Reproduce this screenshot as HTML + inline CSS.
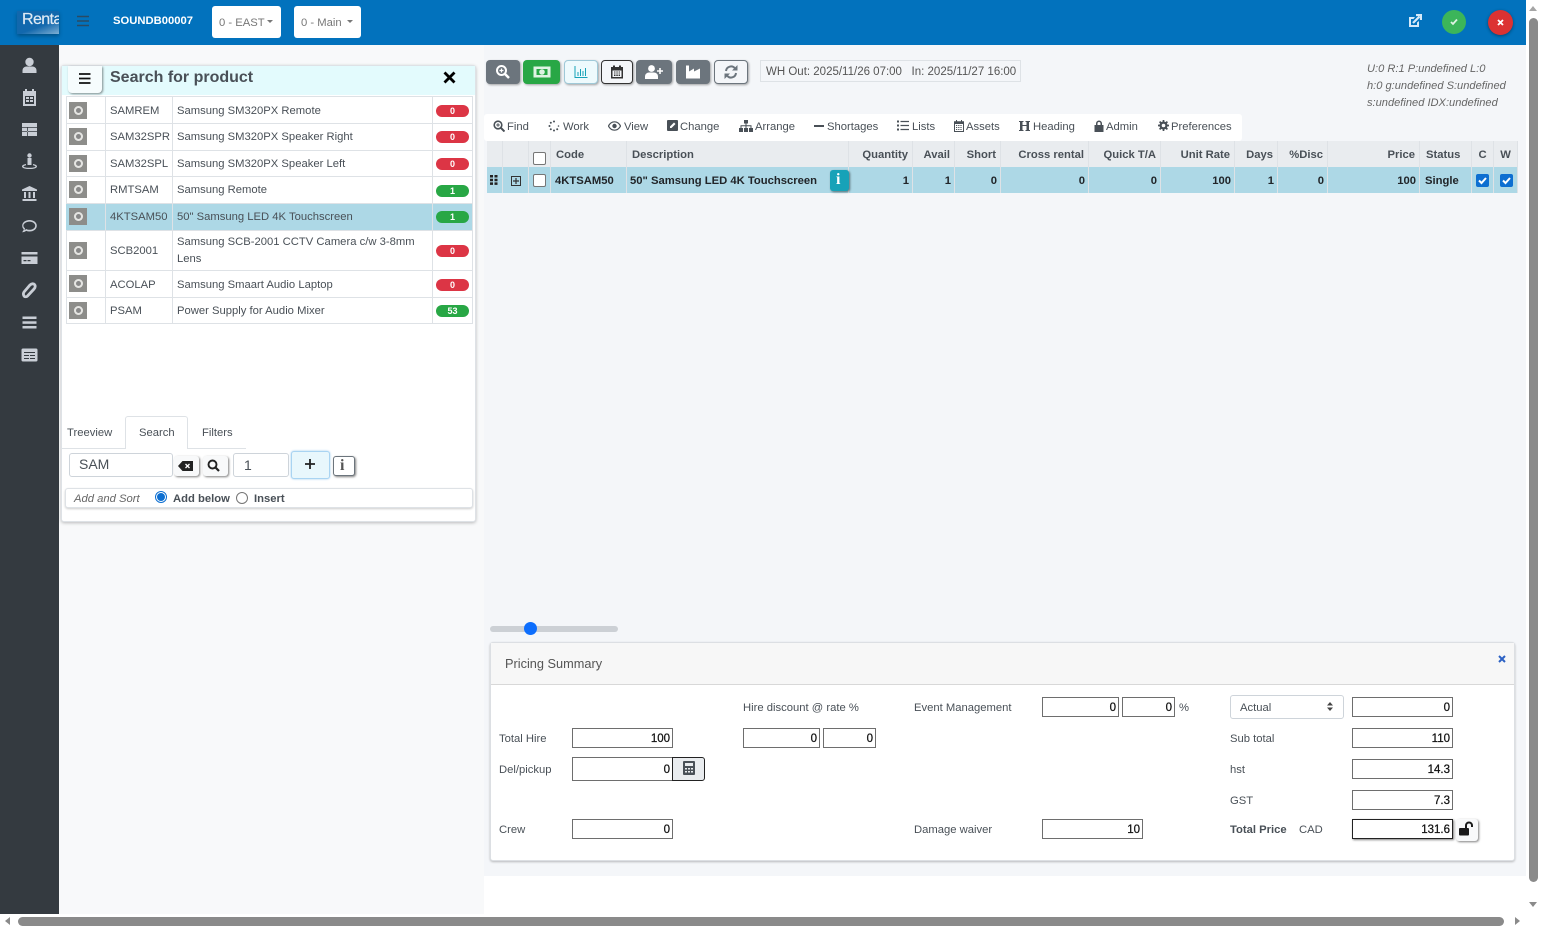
<!DOCTYPE html>
<html><head><meta charset="utf-8"><title>Search for product</title>
<style>
html,body{margin:0;padding:0;width:1541px;height:929px;overflow:hidden;background:#fff}
body{position:relative;font-family:"Liberation Sans",sans-serif;font-size:11.25px;color:#495057}
div,span,svg{position:absolute;box-sizing:border-box}
.t{white-space:nowrap;line-height:14px;margin-top:1px}
.b{font-weight:700}
.sb{left:21px;width:17px;height:17px;fill:#c9ced6}
.gear{left:69px;width:18px;height:17px;background:#8d8d8a}
.gear:after{content:"";position:absolute;left:4.500px;top:4px;width:9px;height:9px;border-radius:50%;background:#e5e5e2;box-shadow:inset 0 0 0 2px #e5e5e2,inset 0 0 0 5px #888}
.bd{left:436px;width:33px;height:12px;border-radius:6px;color:#fff;font-size:9px;font-weight:700;text-align:center;line-height:12px}
.r{background:#dc3545}.g{background:#28a745}
.btn{top:60px;height:24px;border-radius:4px;background:#6c757d;box-shadow:1px 1px 2px rgba(0,0,0,.35)}
.btn svg{left:50%;top:50%;transform:translate(-50%,-50%)}
.hd{top:141px;height:26px;background:#e9ecef;border-right:1px solid #dee2e6;font-weight:700;line-height:28px;padding:0 4px 0 5px;white-space:nowrap;color:#495057;font-size:11.25px}
.rw{top:167px;height:26px;background:#add8e6;border-right:1px solid #dee2e6;font-weight:700;line-height:28px;padding:0 3px 0 5px;white-space:nowrap;color:#212529;font-size:11.25px}
.ra{text-align:right}
.in{height:20px;background:#fff;border:1px solid #6e6e6e;text-align:right;color:#111;font-size:11.5px;line-height:20px;padding-right:2px;-webkit-text-stroke:.25px #111}
.cb{width:13px;height:13px;background:#fff;border:1px solid #767676;border-radius:2px}
.ck{width:13px;height:13px;background:#0d6fd1;border-radius:2px}
</style></head><body>

<!-- backgrounds -->
<div style="left:59px;top:45px;width:425px;height:869px;background:#f8f9fa"></div>
<div style="left:484px;top:45px;width:1042px;height:831px;background:#f4f6f9"></div>

<!-- header -->
<div style="left:0;top:0;width:1526px;height:45px;background:#0272bd"></div>
<div style="left:17px;top:11px;width:42px;height:23px;background:linear-gradient(160deg,#1268ad 62%,#7fb0d4);overflow:hidden;box-shadow:0 2px 4px rgba(0,0,0,.3)"><span class="t" style="left:5px;top:1px;color:#dfeaf4;font-size:16px;letter-spacing:-.6px;-webkit-text-stroke:.2px #dfeaf4">Renta</span></div>
<svg style="left:77px;top:15px" width="12" height="12" viewBox="0 0 12 12"><path d="M0 1.500h12M0 6h12M0 10.500h12" stroke="#2a4a63" stroke-width="1.500"/></svg>
<span class="t b" style="left:113px;top:13px;color:#fff">SOUNDB00007</span>
<div style="left:212px;top:6px;width:69px;height:32px;background:#fff;border-radius:3px"><span class="t" style="left:7px;top:9px;color:#777">0 - EAST</span><span style="left:55px;top:14px;border:3.500px solid transparent;border-top-color:#777;border-bottom:0"></span></div>
<div style="left:294px;top:6px;width:67px;height:32px;background:#fff;border-radius:3px"><span class="t" style="left:7px;top:9px;color:#777">0 - Main</span><span style="left:53px;top:14px;border:3.500px solid transparent;border-top-color:#777;border-bottom:0"></span></div>
<svg style="left:1408px;top:14px" width="14" height="14" viewBox="0 0 14 14"><path d="M1 3h6L5.500 5H3v6h6V8.500l2-1.500v6H1z" fill="#d5e9f8"/><path d="M5 9l6.500-6.500M8 1h5v5" stroke="#d5e9f8" stroke-width="2.200" fill="none"/></svg>
<div style="left:1442px;top:10px;width:24px;height:24px;border-radius:50%;background:#3cb55a"></div>
<svg style="left:1450px;top:18px" width="8" height="8" viewBox="0 0 8 8"><path d="M1 4l2 2 4-4.500" stroke="#dff3e3" stroke-width="1.800" fill="none"/></svg>
<div style="left:1488px;top:10px;width:25px;height:25px;border-radius:50%;background:#dc3232;box-shadow:0 1px 3px rgba(0,0,0,.4)"></div>
<svg style="left:1497px;top:19px" width="7" height="7" viewBox="0 0 7 7"><path d="M1 1l5 5M6 1L1 6" stroke="#fff" stroke-width="1.800"/></svg>

<!-- sidebar -->
<div style="left:0;top:45px;width:59px;height:869px;background:#343a40"></div>
<svg class="sb" style="top:57px" viewBox="0 0 17 17"><circle cx="8.500" cy="5" r="4.200"/><path d="M1.500 16v-2.500c0-2.500 2-4 4-4h6c2 0 4 1.500 4 4V16z"/></svg>
<svg class="sb" style="top:89px" viewBox="0 0 17 17"><path d="M4 0h2v2h5V0h2v2h2v15H2V2h2zM4 7v8h9V7z" fill-rule="evenodd"/><path d="M5 8h3v2H5zM9 8h3v2H9zM5 11h3v2H5zM9 11h3v2H9z"/></svg>
<svg class="sb" style="top:121px" viewBox="0 0 17 17"><path d="M1 2h15v13H1zM1 6v.8h15V6zM1 10v.8h15V10zM6 6.800v8.200h.8V6.800z" fill-rule="evenodd"/></svg>
<svg class="sb" style="top:153px" viewBox="0 0 17 17"><circle cx="8.500" cy="2.500" r="2.200"/><rect x="6.500" y="5" width="4" height="7"/><path d="M5 11C2 11.500 1 12.500 1 13.500c0 1.500 3 2.500 7.500 2.500s7.500-1 7.500-2.500c0-1-1-2-4-2.500v1.200c1.500.3 2.500.8 2.500 1.300 0 .7-2.500 1.300-6 1.300s-6-.6-6-1.300c0-.5 1-1 2.500-1.300z"/></svg>
<svg class="sb" style="top:185px" viewBox="0 0 17 17"><path d="M8.500 1L16 4.500V6H1V4.500zM3 7h2v6H3zM7.500 7h2v6h-2zM12 7h2v6h-2zM1.500 14h14v2h-14z"/></svg>
<svg class="sb" style="top:218px" viewBox="0 0 17 17"><path d="M8.500 2C4.300 2 1.200 4.500 1.200 7.700c0 1.400.6 2.600 1.600 3.600-.3 1.200-1 2.200-1.800 3 1.700 0 3.200-.6 4.200-1.400 1 .4 2.100.6 3.300.6 4.200 0 7.300-2.600 7.300-5.800S12.700 2 8.500 2zm0 1.600c3.300 0 5.700 1.900 5.700 4.100s-2.400 4.100-5.700 4.100c-1.200 0-2.300-.3-3.300-.8-.6.500-1.100.8-1.700 1 .3-.6.400-1.200.5-1.800-1-.7-1.600-1.500-1.600-2.500 0-2.200 2.800-4.100 6.100-4.100z"/></svg>
<svg class="sb" style="top:250px" viewBox="0 0 17 17"><rect x="0.500" y="2" width="16" height="2.500"/><path d="M0.500 6.500h16V14h-16zM2.500 10v1.300h3V10zM6.500 10v1.300h3V10z" fill-rule="evenodd"/></svg>
<svg class="sb" style="top:282px" viewBox="0 0 17 17"><path d="M3 10l6-7c1.500-1.500 3.500-1.500 4.500-.5s1 3-.5 4.500l-6.500 7c-1 1-2.500 1-3.300.2S2 11.500 3 10z" fill="none" stroke="#c9ced6" stroke-width="2.800"/></svg>
<svg class="sb" style="top:314px" viewBox="0 0 17 17"><rect x="1.500" y="2.500" width="14" height="2.500"/><rect x="1.500" y="7.300" width="14" height="2.500"/><rect x="1.500" y="12" width="14" height="2.500"/></svg>
<svg class="sb" style="top:346px" viewBox="0 0 17 17"><path d="M0.500 4C0.500 3 1 2.500 2 2.500h13c1 0 1.500.5 1.500 1.500v10c0 1-.5 1.500-1.500 1.500H2c-1 0-1.500-.5-1.500-1.500zM3 6v1h11V6zM3 9v1h5V9zM9 9v1h5V9zM3 12v1h5v-1zM9 12v1h5v-1z" fill-rule="evenodd"/></svg>

<!-- search panel -->
<div style="left:61px;top:65px;width:415px;height:457px;background:#fff;border:1px solid #dee2e6;border-radius:3px;box-shadow:0 1px 3px rgba(0,0,0,.25)"></div>
<div style="left:62px;top:66px;width:413px;height:29px;background:#e3fbfd"></div>
<div style="left:68px;top:66px;width:34px;height:27px;background:#f6fcfd;border-radius:0 0 4px 4px;box-shadow:1px 1px 2px rgba(0,0,0,.45)"></div>
<svg style="left:79px;top:73px" width="12" height="11" viewBox="0 0 12 11"><path d="M0 1h11.500M0 5.500h11.500M0 10h11.500" stroke="#111" stroke-width="1.700"/></svg>
<span class="t b" style="left:110px;top:67px;font-size:16px;line-height:19px;color:#495057">Search for product</span>
<svg style="left:443px;top:71px" width="13" height="13" viewBox="0 0 13 13"><path d="M1.500 1.500l10 10M11.500 1.500l-10 10" stroke="#000" stroke-width="2.800"/></svg>

<!-- search rows -->
<div style="left:66px;top:96px;width:407px;height:228px;background:#fff;border:1px solid #dee2e6;border-bottom:0;border-right:0"></div>
<div style="left:66px;top:204px;width:407px;height:26px;background:#add8e6"></div>
<div style="left:66px;top:123px;width:407px;height:1px;background:#dee2e6"></div>
<div style="left:66px;top:150px;width:407px;height:1px;background:#dee2e6"></div>
<div style="left:66px;top:176px;width:407px;height:1px;background:#dee2e6"></div>
<div style="left:66px;top:203px;width:407px;height:1px;background:#dee2e6"></div>
<div style="left:66px;top:230px;width:407px;height:1px;background:#dee2e6"></div>
<div style="left:66px;top:270px;width:407px;height:1px;background:#dee2e6"></div>
<div style="left:66px;top:297px;width:407px;height:1px;background:#dee2e6"></div>
<div style="left:66px;top:323px;width:407px;height:1px;background:#dee2e6"></div>
<div style="left:105px;top:96px;width:1px;height:228px;background:#dee2e6"></div>
<div style="left:172px;top:96px;width:1px;height:228px;background:#dee2e6"></div>
<div style="left:432px;top:96px;width:1px;height:228px;background:#dee2e6"></div>
<div style="left:472px;top:96px;width:1px;height:228px;background:#dee2e6"></div>

<div class="gear" style="top:102px"></div><span class="t" style="left:110px;top:103px">SAMREM</span><span class="t" style="left:177px;top:103px">Samsung SM320PX Remote</span><div class="bd r" style="top:105px">0</div>
<div class="gear" style="top:128px"></div><span class="t" style="left:110px;top:129px">SAM32SPR</span><span class="t" style="left:177px;top:129px">Samsung SM320PX Speaker Right</span><div class="bd r" style="top:131px">0</div>
<div class="gear" style="top:155px"></div><span class="t" style="left:110px;top:156px">SAM32SPL</span><span class="t" style="left:177px;top:156px">Samsung SM320PX Speaker Left</span><div class="bd r" style="top:158px">0</div>
<div class="gear" style="top:181px"></div><span class="t" style="left:110px;top:182px">RMTSAM</span><span class="t" style="left:177px;top:182px">Samsung Remote</span><div class="bd g" style="top:185px">1</div>
<div class="gear" style="top:208px"></div><span class="t" style="left:110px;top:209px">4KTSAM50</span><span class="t" style="left:177px;top:209px">50" Samsung LED 4K Touchscreen</span><div class="bd g" style="top:211px">1</div>
<div class="gear" style="top:242px"></div><span class="t" style="left:110px;top:243px">SCB2001</span><span class="t" style="left:177px;top:234px">Samsung SCB-2001 CCTV Camera c/w 3-8mm</span><span class="t" style="left:177px;top:251px">Lens</span><div class="bd r" style="top:245px">0</div>
<div class="gear" style="top:275px"></div><span class="t" style="left:110px;top:277px">ACOLAP</span><span class="t" style="left:177px;top:277px">Samsung Smaart Audio Laptop</span><div class="bd r" style="top:279px">0</div>
<div class="gear" style="top:302px"></div><span class="t" style="left:110px;top:303px">PSAM</span><span class="t" style="left:177px;top:303px">Power Supply for Audio Mixer</span><div class="bd g" style="top:305px">53</div>

<!-- tabs -->
<div style="left:62px;top:448px;width:184px;height:1px;background:#dee2e6"></div>
<div style="left:125px;top:416px;width:63px;height:33px;background:#fff;border:1px solid #dee2e6;border-bottom:0;border-radius:3px 3px 0 0"></div>
<span class="t" style="left:67px;top:425px">Treeview</span>
<span class="t" style="left:139px;top:425px">Search</span>
<span class="t" style="left:202px;top:425px">Filters</span>

<div style="left:69px;top:453px;width:104px;height:24px;background:#fff;border:1px solid #ced4da;border-radius:3px"></div>
<span class="t" style="left:79px;top:456px;font-size:14px;line-height:15px">SAM</span>
<div style="left:174px;top:456px;width:25px;height:20px;background:#f8f9fa;border-radius:3px;box-shadow:1px 1px 2px rgba(0,0,0,.5)"></div>
<svg style="left:178px;top:461px" width="15" height="10" viewBox="0 0 15 10"><path d="M4.500 0H15v10H4.500L0 5z" fill="#222"/><path d="M7.500 3l4 4M11.500 3l-4 4" stroke="#fff" stroke-width="1.300"/></svg>
<div style="left:203px;top:456px;width:25px;height:20px;background:#f8f9fa;border-radius:3px;box-shadow:1px 1px 2px rgba(0,0,0,.5)"></div>
<svg style="left:207px;top:459px" width="13" height="13" viewBox="0 0 13 13"><circle cx="5.500" cy="5.500" r="4" fill="none" stroke="#222" stroke-width="1.900"/><path d="M8.500 8.500l3.500 3.500" stroke="#222" stroke-width="2.200"/></svg>
<div style="left:233px;top:453px;width:56px;height:24px;background:#fff;border:1px solid #ced4da;border-radius:3px"></div>
<span class="t" style="left:244px;top:457px;font-size:14px;line-height:15px">1</span>
<div style="left:291px;top:451px;width:39px;height:28px;background:#e8f7fc;border:1px solid #a9d4f2;border-radius:3px;box-shadow:0 0 2px #9cc9ec"></div>
<svg style="left:305px;top:459px" width="10" height="10" viewBox="0 0 10 10"><path d="M5 0v10M0 5h10" stroke="#222" stroke-width="1.800"/></svg>
<div style="left:333px;top:456px;width:22px;height:20px;background:#fff;border:1px solid #6c757d;border-radius:3px;box-shadow:1px 1px 2px rgba(0,0,0,.5)"></div>
<span class="t b" style="left:340px;top:458px;font-family:'Liberation Serif',serif;font-size:16px;color:#555">i</span>

<div style="left:65px;top:488px;width:408px;height:20px;background:#fff;border:1px solid #dee2e6;border-radius:3px;box-shadow:0 1px 2px rgba(0,0,0,.2)"></div>
<span class="t" style="left:74px;top:491px;font-style:italic;color:#666">Add and Sort</span>
<div style="left:155px;top:491px;width:12px;height:12px;border-radius:50%;border:1px solid #0d6fd1;background:#fff"></div>
<div style="left:157px;top:493px;width:8px;height:8px;border-radius:50%;background:#0d6fd1"></div>
<span class="t b" style="left:173px;top:491px;color:#495057">Add below</span>
<div style="left:236px;top:492px;width:12px;height:12px;border-radius:50%;border:1px solid #767676;background:#fff"></div>
<span class="t b" style="left:254px;top:491px;color:#495057">Insert</span>

<!-- top toolbar -->
<div class="btn" style="left:486px;width:34px"><svg width="15" height="15" viewBox="0 0 15 15"><circle cx="6" cy="6" r="4.500" fill="none" stroke="#fff" stroke-width="2"/><path d="M9.500 9.500l4 4" stroke="#fff" stroke-width="2.500"/><path d="M4 6h4M6 4v4" stroke="#fff" stroke-width="1.200"/></svg></div>
<div class="btn" style="left:523px;width:37px;background:#28a745"><svg width="17" height="11" viewBox="0 0 17 11"><path d="M0 0h17v11H0zM3 2.500v6h11v-6z" fill="#dff3e3" fill-rule="evenodd"/><circle cx="8.500" cy="5.500" r="2.800" fill="#dff3e3"/></svg></div>
<div class="btn" style="left:564px;width:34px;background:#eefafd;border:1px solid #9fc9d8"><svg width="13" height="12" viewBox="0 0 13 12"><path d="M.5 0v11.500H13M3.500 6v4M6 3v7M8.500 5v5M11 2v8" stroke="#17a2b8" fill="none"/></svg></div>
<div class="btn" style="left:601px;width:32px;background:#f4f6f9;border:1px solid #333"><svg width="12" height="13" viewBox="0 0 12 13"><path d="M2 0h2v1.500h4V0h2v1.500h2V13H0V1.500h2zM1.500 5v6.500h9V5z" fill="#333" fill-rule="evenodd"/><path d="M3 6.500h6M3 8.500h6M3 10h6" stroke="#333" stroke-dasharray="1.500 .8"/></svg></div>
<div class="btn" style="left:636px;width:36px"><svg width="18" height="14" viewBox="0 0 18 14"><circle cx="6.500" cy="3.500" r="3.400" fill="#fff"/><path d="M0 14v-2.500C0 9 2 7.500 4 7.500h5c2 0 4 1.500 4 4V14z" fill="#fff"/><path d="M15 3v6M12 6h6" stroke="#fff" stroke-width="1.600"/></svg></div>
<div class="btn" style="left:676px;width:34px"><svg width="14" height="13" viewBox="0 0 14 13"><path d="M0 0h3v6l5-3v3l6-3v10H0z" fill="#fff"/></svg></div>
<div class="btn" style="left:714px;width:34px;background:#f4f6f9;border:1px solid #6c757d"><svg width="14" height="14" viewBox="0 0 14 14"><path d="M2 6a5 5 0 0 1 9-2.500M12 8a5 5 0 0 1-9 2.500" fill="none" stroke="#6c757d" stroke-width="2"/><path d="M13.500 0v5.500H8zM.5 14V8.500H6z" fill="#6c757d"/></svg></div>
<div style="left:760px;top:60px;width:261px;height:22px;border:1px solid #dee2e6"></div>
<span class="t" style="left:766px;top:64px;font-size:11.5px;color:#555">WH Out: 2025/11/26 07:00&nbsp;&nbsp; In: 2025/11/27 16:00</span>

<span class="t" style="left:1367px;top:61px;font-style:italic;color:#666;font-size:11.1px">U:0 R:1 P:undefined L:0</span>
<span class="t" style="left:1367px;top:78px;font-style:italic;color:#666;font-size:11.1px">h:0 g:undefined S:undefined</span>
<span class="t" style="left:1367px;top:95px;font-style:italic;color:#666;font-size:11.1px">s:undefined IDX:undefined</span>

<!-- menu -->
<div style="left:484px;top:114px;width:758px;height:27px;background:#fff;border-radius:3px"></div>
<svg style="left:493px;top:120px" width="12" height="12" viewBox="0 0 12 12"><circle cx="5" cy="5" r="3.800" fill="none" stroke="#495057" stroke-width="1.600"/><path d="M8 8l3.500 3.500" stroke="#495057" stroke-width="2"/><path d="M3.200 5h3.600M5 3.200v3.600" stroke="#495057"/></svg><span class="t" style="left:507px;top:119px">Find</span>
<svg style="left:548px;top:120px" width="12" height="12" viewBox="0 0 12 12"><g fill="#495057"><circle cx="6" cy="1.500" r="1"/><circle cx="2.800" cy="2.800" r="1"/><circle cx="1.500" cy="6" r="1"/><circle cx="2.800" cy="9.200" r="1"/><circle cx="6" cy="10.500" r="1"/><circle cx="9.200" cy="9.200" r="1"/><circle cx="10.500" cy="6" r=".8"/></g></svg><span class="t" style="left:563px;top:119px">Work</span>
<svg style="left:608px;top:121px" width="13" height="10" viewBox="0 0 13 10"><path d="M.5 5C2 2 4 .8 6.500.8S11 2 12.500 5C11 8 9 9.200 6.500 9.200S2 8 .5 5z" fill="none" stroke="#495057" stroke-width="1.200"/><circle cx="6.500" cy="5" r="2.200" fill="#495057"/></svg><span class="t" style="left:624px;top:119px">View</span>
<svg style="left:667px;top:120px" width="11" height="11" viewBox="0 0 11 11"><path d="M0 1q0-1 1-1h9q1 0 1 1v9q0 1-1 1H1q-1 0-1-1z" fill="#495057"/><path d="M3 8V6.500L7 2.500l1.500 1.500-4 4z" fill="#fff"/></svg><span class="t" style="left:680px;top:119px">Change</span>
<svg style="left:739px;top:120px" width="14" height="12" viewBox="0 0 14 12"><path d="M5 0h4v3.500H5zM0 8h4v4H0zM5 8h4v4H5zM10 8h4v4h-4z" fill="#495057"/><path d="M7 3.500V8M2 8V5.800h10V8" stroke="#495057" fill="none"/></svg><span class="t" style="left:755px;top:119px">Arrange</span>
<div style="left:814px;top:125px;width:10px;height:2px;background:#495057"></div><span class="t" style="left:827px;top:119px">Shortages</span>
<svg style="left:897px;top:120px" width="12" height="11" viewBox="0 0 12 11"><path d="M0 .5h2v2H0zM0 4.500h2v2H0zM0 8.500h2v2H0z" fill="#495057"/><path d="M3.500 1.500H12M3.500 5.500H12M3.500 9.500H12" stroke="#495057" stroke-width="1.200"/></svg><span class="t" style="left:912px;top:119px">Lists</span>
<svg style="left:954px;top:120px" width="10" height="12" viewBox="0 0 10 12"><path d="M2 0h1v1.300h4V0h1v1.300h2V12H0V1.300h2zM1 4v7h8V4z" fill="#495057" fill-rule="evenodd"/><path d="M2 5.500h6M2 7.500h6M2 9.500h6" stroke="#495057" stroke-dasharray="1 .8"/></svg><span class="t" style="left:966px;top:119px">Assets</span>
<svg style="left:1019px;top:121px" width="11" height="10" viewBox="0 0 11 10"><path d="M0 0h4.500v1H3.500v3h4V1h-1V0H11v1h-1v8h1v1H6.500V9h1V5h-4v4h1v1H0V9h1V1H0z" fill="#495057"/></svg><span class="t" style="left:1033px;top:119px">Heading</span>
<svg style="left:1094px;top:120px" width="10" height="12" viewBox="0 0 10 12"><path d="M2 5V3.500a3 3 0 0 1 6 0V5h1.500v7H.5V5zM3.500 5h3V3.500a1.500 1.500 0 0 0-3 0z" fill="#495057" fill-rule="evenodd"/></svg><span class="t" style="left:1106px;top:119px">Admin</span>
<svg style="left:1158px;top:120px" width="11" height="11" viewBox="0 0 11 11"><circle cx="5.500" cy="5.500" r="2.900" fill="none" stroke="#495057" stroke-width="2.200"/><path d="M5.500 0v2M5.500 9v2M0 5.500h2M9 5.500h2M1.600 1.600L3 3M8 8l1.400 1.400M9.400 1.600L8 3M3 8L1.600 9.400" stroke="#495057" stroke-width="1.700"/></svg><span class="t" style="left:1171px;top:119px">Preferences</span>

<!-- main table -->
<div class="hd" style="left:487px;width:16px"></div>
<div class="hd" style="left:503px;width:26px"></div>
<div class="hd" style="left:529px;width:22px"></div>
<div class="hd" style="left:551px;width:76px">Code</div>
<div class="hd" style="left:627px;width:222px">Description</div>
<div class="hd ra" style="left:849px;width:64px">Quantity</div>
<div class="hd ra" style="left:913px;width:42px">Avail</div>
<div class="hd ra" style="left:955px;width:46px">Short</div>
<div class="hd ra" style="left:1001px;width:88px">Cross rental</div>
<div class="hd ra" style="left:1089px;width:72px">Quick T/A</div>
<div class="hd ra" style="left:1161px;width:74px">Unit Rate</div>
<div class="hd ra" style="left:1235px;width:43px">Days</div>
<div class="hd ra" style="left:1278px;width:50px">%Disc</div>
<div class="hd ra" style="left:1328px;width:92px">Price</div>
<div class="hd" style="left:1420px;width:52px;padding-left:6px">Status</div>
<div class="hd" style="left:1472px;width:22px;text-align:center;padding:0">C</div>
<div class="hd" style="left:1494px;width:24px;text-align:center;padding:0">W</div>

<div class="rw" style="left:487px;width:16px"></div>
<div class="rw" style="left:503px;width:26px"></div>
<div class="rw" style="left:529px;width:22px"></div>
<div class="rw" style="left:551px;width:76px;padding-left:4px">4KTSAM50</div>
<div class="rw" style="left:627px;width:222px;padding-left:3px">50" Samsung LED 4K Touchscreen</div>
<div class="rw ra" style="left:849px;width:64px">1</div>
<div class="rw ra" style="left:913px;width:42px">1</div>
<div class="rw ra" style="left:955px;width:46px">0</div>
<div class="rw ra" style="left:1001px;width:88px">0</div>
<div class="rw ra" style="left:1089px;width:72px">0</div>
<div class="rw ra" style="left:1161px;width:74px">100</div>
<div class="rw ra" style="left:1235px;width:43px">1</div>
<div class="rw ra" style="left:1278px;width:50px">0</div>
<div class="rw ra" style="left:1328px;width:92px">100</div>
<div class="rw" style="left:1420px;width:52px;padding-left:5px">Single</div>
<div class="rw" style="left:1472px;width:22px"></div>
<div class="rw" style="left:1494px;width:24px"></div>

<svg style="left:490px;top:175px" width="8" height="10" viewBox="0 0 8 10"><path d="M0 0h3v2.500H0zM4.500 0h3v2.500h-3zM0 3.700h3v2.500H0zM4.500 3.700h3v2.500h-3zM0 7.400h3v2.500H0zM4.500 7.400h3v2.500h-3z" fill="#222"/></svg>
<svg style="left:511px;top:176px" width="10" height="10" viewBox="0 0 10 10"><rect x=".5" y=".5" width="9" height="9" fill="none" stroke="#333"/><path d="M5 2v6M2 5h6" stroke="#333" stroke-width="1.200"/></svg>
<div class="cb" style="left:533px;top:152px;width:13px;height:13px"></div>
<div class="cb" style="left:533px;top:174px"></div>
<div style="left:830px;top:170px;width:19px;height:21px;background:#17a2b8;border-radius:3px;box-shadow:1px 1px 2px rgba(0,0,0,.5)"></div>
<span class="t b" style="left:836px;top:172px;font-family:'Liberation Serif',serif;font-size:16px;color:#fff">i</span>
<div class="ck" style="left:1476px;top:174px"></div>
<svg style="left:1476px;top:174px" width="13" height="13" viewBox="0 0 13 13"><path d="M3 6.500l2.500 2.500L10 4" fill="none" stroke="#fff" stroke-width="2"/></svg>
<div class="ck" style="left:1500px;top:174px"></div>
<svg style="left:1500px;top:174px" width="13" height="13" viewBox="0 0 13 13"><path d="M3 6.500l2.500 2.500L10 4" fill="none" stroke="#fff" stroke-width="2"/></svg>

<!-- slider -->
<div style="left:490px;top:626px;width:128px;height:6px;border-radius:3px;background:#ccd0d5"></div>
<div style="left:524px;top:622px;width:13px;height:13px;border-radius:50%;background:#0d6efd"></div>

<!-- Pricing summary -->
<div style="left:490px;top:642px;width:1025px;height:219px;background:#fff;border:1px solid #dcdfe3;border-radius:3px;box-shadow:0 1px 2px rgba(0,0,0,.25)"></div>
<div style="left:491px;top:643px;width:1023px;height:42px;background:#f7f7f7;border-bottom:1px solid #d8d8d8"></div>
<span class="t" style="left:505px;top:656px;font-size:12.750px;color:#555">Pricing Summary</span>
<svg style="left:1498px;top:655px" width="8" height="8" viewBox="0 0 8 8"><path d="M1 1l6 6M7 1L1 7" stroke="#2d62c4" stroke-width="2"/></svg>

<span class="t" style="left:743px;top:700px">Hire discount @ rate %</span>
<span class="t" style="left:914px;top:700px">Event Management</span>
<span class="t" style="left:499px;top:731px">Total Hire</span>
<span class="t" style="left:499px;top:762px">Del/pickup</span>
<span class="t" style="left:499px;top:822px">Crew</span>
<span class="t" style="left:914px;top:822px">Damage waiver</span>
<span class="t" style="left:1179px;top:700px">%</span>
<span class="t" style="left:1230px;top:731px">Sub total</span>
<span class="t" style="left:1230px;top:762px">hst</span>
<span class="t" style="left:1230px;top:793px">GST</span>
<span class="t b" style="left:1230px;top:822px">Total Price</span>
<span class="t" style="left:1299px;top:822px">CAD</span>

<div class="in" style="left:572px;top:728px;width:101px">100</div>
<div class="in" style="left:572px;top:757px;width:101px;height:24px;line-height:24px">0</div>
<div style="left:672px;top:757px;width:33px;height:24px;background:#e9ecef;border:1px solid #222;border-radius:0 3px 3px 0"></div>
<svg style="left:683px;top:761px" width="12" height="14" viewBox="0 0 12 14"><path d="M1 0h10q1 0 1 1v12q0 1-1 1H1q-1 0-1-1V1q0-1 1-1zM2 2v3h8V2zM2 7v1.500h2V7zM5 7v1.500h2V7zM8 7v1.500h2V7zM2 10v1.500h2V10zM5 10v1.500h2V10zM8 10v1.500h2V10z" fill="#495057" fill-rule="evenodd"/></svg>
<div class="in" style="left:572px;top:819px;width:101px">0</div>
<div class="in" style="left:743px;top:728px;width:77px">0</div>
<div class="in" style="left:823px;top:728px;width:53px">0</div>
<div class="in" style="left:1042px;top:697px;width:77px">0</div>
<div class="in" style="left:1122px;top:697px;width:53px">0</div>
<div class="in" style="left:1042px;top:819px;width:101px">10</div>
<div style="left:1230px;top:695px;width:114px;height:24px;background:#fff;border:1px solid #ced4da;border-radius:3px"></div>
<span class="t" style="left:1240px;top:700px">Actual</span>
<svg style="left:1327px;top:702px" width="6" height="9" viewBox="0 0 6 9"><path d="M3 0l3 3.500H0zM3 9L0 5.500h6z" fill="#444"/></svg>
<div class="in" style="left:1352px;top:697px;width:101px">0</div>
<div class="in" style="left:1352px;top:728px;width:101px">110</div>
<div class="in" style="left:1352px;top:759px;width:101px">14.3</div>
<div class="in" style="left:1352px;top:790px;width:101px">7.3</div>
<div class="in" style="left:1352px;top:819px;width:101px;border-color:#222;box-shadow:1px 1px 2px rgba(0,0,0,.5)">131.6</div>
<div style="left:1456px;top:819px;width:22px;height:22px;background:#f8f9fa;border-radius:3px;box-shadow:1px 1px 2px rgba(0,0,0,.5)"></div>
<svg style="left:1459px;top:821px" width="15" height="15" viewBox="0 0 15 15"><rect x="0" y="7" width="10" height="7.500" rx="1" fill="#1a1a1a"/><path d="M7 7.500V4.500a3 3 0 0 1 6 0V6" fill="none" stroke="#1a1a1a" stroke-width="2"/></svg>

<!-- scrollbars -->
<div style="left:1529px;top:18px;width:9px;height:864px;background:#8a8a8a;border-radius:5px"></div>
<div style="left:1529px;top:6px;border:4.500px solid transparent;border-bottom:5px solid #a5a5a5;border-top:0"></div>
<div style="left:1529px;top:902px;border:4.500px solid transparent;border-top:5px solid #8a8a8a;border-bottom:0"></div>
<div style="left:18px;top:917px;width:1486px;height:9px;background:#8a8a8a;border-radius:5px"></div>
<div style="left:5px;top:917px;border:4.500px solid transparent;border-right:5px solid #8a8a8a;border-left:0"></div>
<div style="left:1515px;top:917px;border:4.500px solid transparent;border-left:5px solid #8a8a8a;border-right:0"></div>
</body></html>
